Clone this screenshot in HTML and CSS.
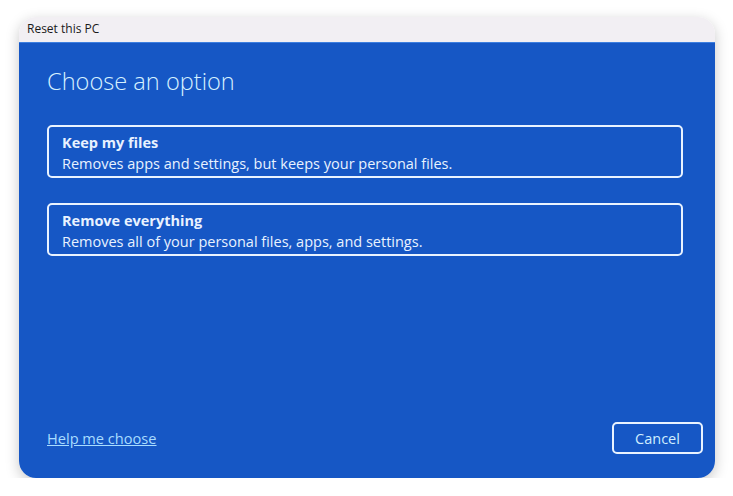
FILE: index.html
```html
<!DOCTYPE html>
<html>

<head>
  <meta charset="UTF-8">
  <link rel="stylesheet" href="styles.css">
</head>

<body>
  <div class="window">
    <div class="titlebar">Reset this PC</div>

    <div class="content">
      <h1 class="heading">Choose an option</h1>

      <div class="option">
        <div class="option-title">Keep my files</div>
        <div class="option-desc">Removes apps and settings, but keeps your personal files.</div>
      </div>

      <div class="option">
        <div class="option-title">Remove everything</div>
        <div class="option-desc">Removes all of your personal files, apps, and settings.</div>
      </div>

      <div class="footer">
        <a class="help" href="#">Help me choose</a>
        <button class="cancel">Cancel</button>
      </div>
    </div>
  </div>
</body>

</html>
```

FILE: styles.css
```css
body {
  margin: 0;
  background-color: #ffffff;
  font-family: "Open Sans", "Noto Sans", sans-serif;
}

div.window {
  display: flex;
  flex-direction: column;
  width: 696px;
  height: 461px;
  margin: 17px 0 0 19px;
  border-radius: 17px;
  overflow: hidden;
  box-shadow: 0 4px 14px rgba(0, 0, 0, 0.22);
}

div.titlebar {
  height: 26px;
  padding-left: 8px;
  line-height: 24px;
  font-size: 12px;
  color: #1a1a1a;
  background-color: #f2eff3;
  border-bottom: 1px solid #3d7fe0;
  box-sizing: border-box;
}

div.content {
  flex: 1;
  display: flex;
  flex-direction: column;
  padding: 0 32px 24px 28px;
  background-color: #1657c5;
  color: #e8f2ff;
}

h1.heading {
  margin: 22px 0 27px 0;
  font-size: 23.6px;
  font-weight: 300;
  line-height: 33px;
  color: #d6f1ff;
}

div.option {
  height: 53px;
  margin-bottom: 25px;
  padding: 6px 13px;
  border: 2px solid #e9f3ff;
  border-radius: 5px;
  box-sizing: border-box;
}

div.option-title {
  font-size: 14.5px;
  font-weight: 700;
  line-height: 20px;
}

div.option-desc {
  font-size: 14.5px;
  line-height: 21px;
}

div.footer {
  margin-top: auto;
  margin-right: -20px;
  display: flex;
  align-items: center;
  justify-content: space-between;
}

a.help {
  font-size: 14.6px;
  color: #a8dcff;
}

button.cancel {
  width: 91px;
  height: 32px;
  font-family: inherit;
  font-size: 14.5px;
  color: #cfeeff;
  background-color: #1657c5;
  border: 2px solid #e9f3ff;
  border-radius: 5px;
}
```
